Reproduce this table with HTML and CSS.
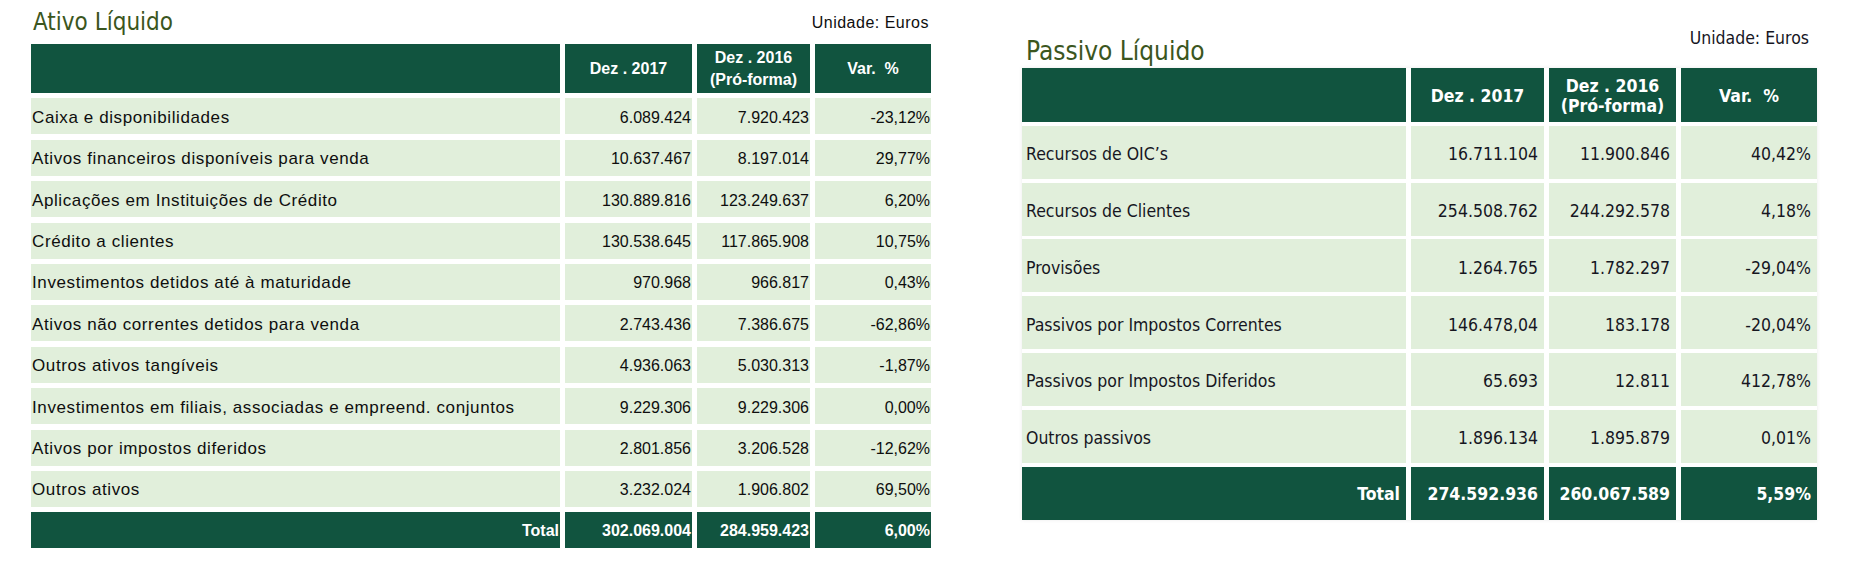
FILE: index.html
```html
<!DOCTYPE html>
<html lang="pt">
<head>
<meta charset="utf-8">
<title>Ativo e Passivo Líquido</title>
<link rel="stylesheet" href="styles.css">
</head>
<body>
<div class="page">
  <section class="panel panel-ativo">
    <div class="panel-head">
      <h2 class="title">Ativo Líquido</h2>
      <span class="unit">Unidade: Euros</span>
    </div>
    <div class="grid">
      <div class="hd"></div>
      <div class="hd">Dez . 2017</div>
      <div class="hd">Dez . 2016<br>(Pró-forma)</div>
      <div class="hd">Var.&nbsp; %</div>

      <div class="c lbl">Caixa e disponibilidades</div><div class="c num">6.089.424</div><div class="c num">7.920.423</div><div class="c num">-23,12%</div>
      <div class="c lbl">Ativos financeiros disponíveis para venda</div><div class="c num">10.637.467</div><div class="c num">8.197.014</div><div class="c num">29,77%</div>
      <div class="c lbl">Aplicações em Instituições de Crédito</div><div class="c num">130.889.816</div><div class="c num">123.249.637</div><div class="c num">6,20%</div>
      <div class="c lbl">Crédito a clientes</div><div class="c num">130.538.645</div><div class="c num">117.865.908</div><div class="c num">10,75%</div>
      <div class="c lbl">Investimentos detidos até à maturidade</div><div class="c num">970.968</div><div class="c num">966.817</div><div class="c num">0,43%</div>
      <div class="c lbl">Ativos não correntes detidos para venda</div><div class="c num">2.743.436</div><div class="c num">7.386.675</div><div class="c num">-62,86%</div>
      <div class="c lbl">Outros ativos tangíveis</div><div class="c num">4.936.063</div><div class="c num">5.030.313</div><div class="c num">-1,87%</div>
      <div class="c lbl">Investimentos em filiais, associadas e empreend. conjuntos</div><div class="c num">9.229.306</div><div class="c num">9.229.306</div><div class="c num">0,00%</div>
      <div class="c lbl">Ativos por impostos diferidos</div><div class="c num">2.801.856</div><div class="c num">3.206.528</div><div class="c num">-12,62%</div>
      <div class="c lbl">Outros ativos</div><div class="c num">3.232.024</div><div class="c num">1.906.802</div><div class="c num">69,50%</div>

      <div class="t">Total</div><div class="t">302.069.004</div><div class="t">284.959.423</div><div class="t">6,00%</div>
    </div>
  </section>

  <section class="panel panel-passivo">
    <div class="panel-head">
      <h2 class="title">Passivo Líquido</h2>
      <span class="unit">Unidade: Euros</span>
    </div>
    <div class="grid">
      <div class="hd"></div>
      <div class="hd">Dez . 2017</div>
      <div class="hd">Dez . 2016<br>(Pró-forma)</div>
      <div class="hd">Var.&nbsp; %</div>

      <div class="c lbl">Recursos de OIC’s</div><div class="c num">16.711.104</div><div class="c num">11.900.846</div><div class="c num">40,42%</div>
      <div class="c lbl">Recursos de Clientes</div><div class="c num">254.508.762</div><div class="c num">244.292.578</div><div class="c num">4,18%</div>
      <div class="c lbl">Provisões</div><div class="c num">1.264.765</div><div class="c num">1.782.297</div><div class="c num">-29,04%</div>
      <div class="c lbl">Passivos por Impostos Correntes</div><div class="c num">146.478,04</div><div class="c num">183.178</div><div class="c num">-20,04%</div>
      <div class="c lbl">Passivos por Impostos Diferidos</div><div class="c num">65.693</div><div class="c num">12.811</div><div class="c num">412,78%</div>
      <div class="c lbl">Outros passivos</div><div class="c num">1.896.134</div><div class="c num">1.895.879</div><div class="c num">0,01%</div>

      <div class="t">Total</div><div class="t">274.592.936</div><div class="t">260.067.589</div><div class="t">5,59%</div>
    </div>
  </section>
</div>
</body>
</html>
```

FILE: styles.css
```css
* { box-sizing: border-box; }

html, body {
  margin: 0;
  padding: 0;
  background: #ffffff;
}

.page {
  display: flex;
  align-items: flex-start;
  padding-left: 31px;
  gap: 91px;
}

.panel-head {
  display: flex;
  justify-content: space-between;
  align-items: flex-start;
}

.title {
  margin: 0;
  font-family: "DejaVu Sans Condensed", "DejaVu Sans", sans-serif;
  font-weight: normal;
  color: #3b5620;
  white-space: nowrap;
}

.unit {
  white-space: nowrap;
}

.grid {
  display: grid;
}

.hd, .c, .t {
  display: flex;
  align-items: center;
  white-space: nowrap;
}

.hd {
  background: #11543f;
  color: #ffffff;
  font-weight: bold;
  justify-content: center;
  text-align: center;
}

.c {
  background: #e1efdb;
}

.num {
  justify-content: flex-end;
}

.t {
  background: #11543f;
  color: #ffffff;
  font-weight: bold;
  justify-content: flex-end;
}

/* ---------- Ativo ---------- */
.panel-ativo {
  width: 900px;
  font-family: "Liberation Sans", Arial, sans-serif;
  font-size: 16px;
  color: #0e0e0e;
}

.panel-ativo .panel-head {
  height: 44px;
}

.panel-ativo .title {
  font-size: 24px;
  line-height: 28px;
  margin-top: 8px;
  margin-left: 2px;
}

.panel-ativo .unit {
  font-size: 16px;
  line-height: 18px;
  margin-top: 14px;
  margin-right: 2px;
  letter-spacing: 0.5px;
}

.panel-ativo .grid {
  grid-template-columns: 529px 127px 113px 116px;
  grid-template-rows: 49px repeat(11, 36px);
  column-gap: 5px;
  row-gap: 5.4px;
}

.panel-ativo .hd {
  line-height: 22px;
  font-size: 16px;
  padding-top: 1px;
}

.panel-ativo .c {
  padding-top: 3px;
}

.panel-ativo .lbl {
  padding-left: 1px;
  font-size: 17px;
  letter-spacing: 0.6px;
}

.panel-ativo .num,
.panel-ativo .t {
  padding-right: 1px;
}

.panel-ativo .t {
  padding-top: 1px;
}

/* ---------- Passivo ---------- */
.panel-passivo {
  width: 795px;
  font-family: "DejaVu Sans Condensed", "DejaVu Sans", sans-serif;
  font-size: 17.5px;
  color: #16161f;
}

.panel-passivo .panel-head {
  height: 68px;
}

.panel-passivo .title {
  font-size: 26px;
  line-height: 30px;
  margin-top: 36px;
  margin-left: 4px;
}

.panel-passivo .unit {
  font-size: 17.5px;
  line-height: 20px;
  margin-top: 28px;
  margin-right: 8px;
}

.panel-passivo .grid {
  grid-template-columns: 384px 133px 127px 136px;
  grid-template-rows: 54px repeat(7, 53px);
  column-gap: 5px;
  row-gap: 3.8px;
  box-shadow: 0 0 4px rgba(0, 0, 0, 0.08);
}

.panel-passivo .hd {
  line-height: 20px;
  padding-top: 2px;
}

.panel-passivo .c {
  padding-top: 4px;
}

.panel-passivo .t {
  padding-top: 2px;
}

.panel-passivo .lbl {
  padding-left: 4px;
}

.panel-passivo .num,
.panel-passivo .t {
  padding-right: 6px;
}
```
